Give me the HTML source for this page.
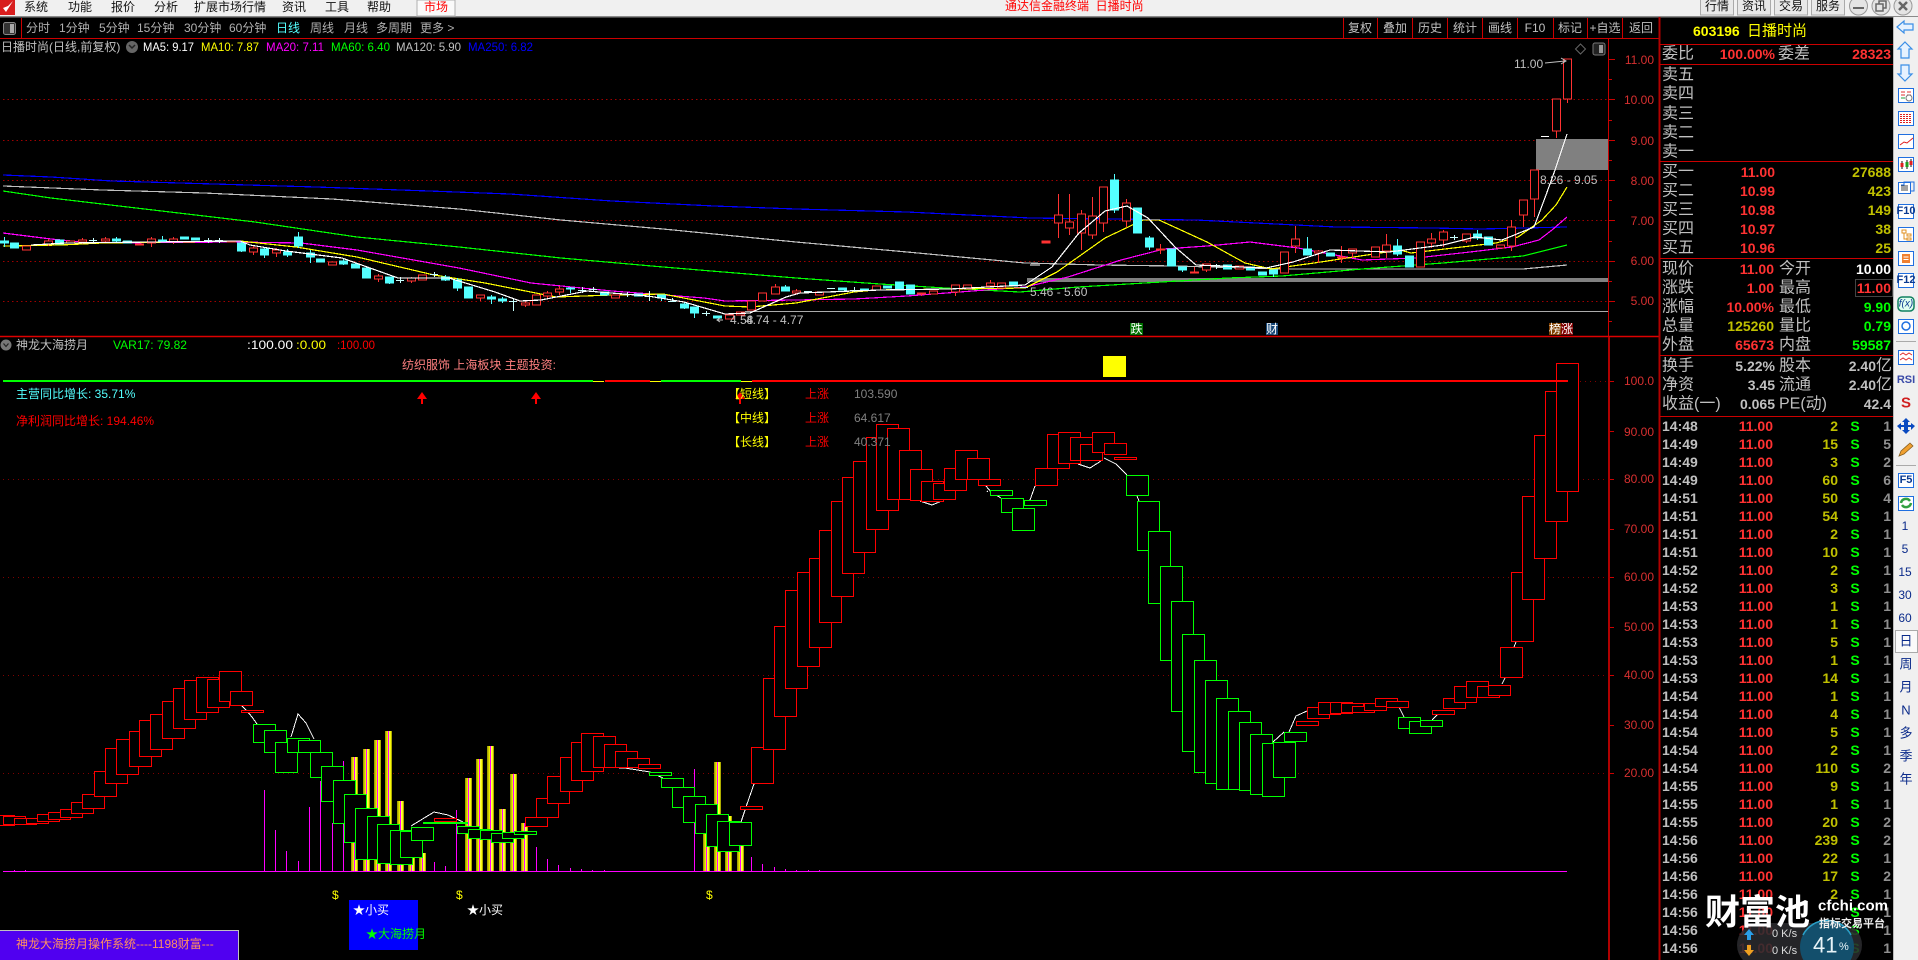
<!DOCTYPE html>
<html><head><meta charset="utf-8"><style>
html,body{margin:0;padding:0;background:#000;overflow:hidden}
svg{display:block}
text{font-family:"Liberation Sans","WenQuanYi Zen Hei","Noto Sans CJK SC",sans-serif;font-size:12px;dominant-baseline:central;white-space:pre}
.b text,text.b{font-weight:bold;font-size:14px}
.l text,text.l{font-size:16px;fill:#c0c0c0}
.e text{text-anchor:end}
.m text,text.m{text-anchor:middle}
.ma{fill:none;stroke-width:1.2;shape-rendering:crispEdges}
</style></head><body>
<svg xmlns="http://www.w3.org/2000/svg" width="1918" height="960" viewBox="0 0 1918 960">
<rect width="1918" height="960" fill="#000"/>
<!-- menu bar -->
<rect width="1918" height="16" fill="#f0f0f0"/><rect y="16" width="1918" height="1.5" fill="#8a8a8a"/>
<rect x="417" y="0" width="38" height="16" fill="#fafafa" stroke="#b0b0b0"/>
<rect width="15" height="15" fill="#d81e1e"/><path d="M3 8l3 4 7-11-5 5z" fill="#fff"/>
<g fill="#111">
<text x="24" y="7">系统</text><text x="68" y="7">功能</text><text x="111" y="7">报价</text><text x="154" y="7">分析</text><text x="194" y="7">扩展市场行情</text><text x="282" y="7">资讯</text><text x="325" y="7">工具</text><text x="367" y="7">帮助</text></g>
<text x="424" y="7" fill="#f00">市场</text>
<text x="1005" y="6" fill="#f00">通达信金融终端  日播时尚</text>
<g fill="#e8e8e8" stroke="#aaa"><rect x="1700.5" y="-2" width="33" height="17"/><rect x="1737.5" y="-2" width="33" height="17"/><rect x="1774.5" y="-2" width="33" height="17"/><rect x="1811.5" y="-2" width="33" height="17"/></g>
<g fill="#111"><text x="1705" y="6">行情</text><text x="1742" y="6">资讯</text><text x="1779" y="6">交易</text><text x="1816" y="6">服务</text></g>
<g fill="#e4e4e4" stroke="#999"><circle cx="1858.5" cy="6" r="9"/><circle cx="1881" cy="6" r="9"/><circle cx="1903" cy="6" r="9"/></g>
<path d="M1853 8h11" stroke="#666" stroke-width="2"/><path d="M1876 4h7v7h-7zM1879 4v-3h7v7h-3" fill="none" stroke="#666" stroke-width="1.5"/><path d="M1899 2l8 8M1907 2l-8 8" stroke="#666" stroke-width="2.5"/>
<!-- toolbar -->
<rect x="3.5" y="22.5" width="12" height="12" rx="2" fill="#333" stroke="#888"/><rect x="10" y="24" width="4" height="9" fill="#aaa"/>
<path d="M21.5 18V38" stroke="#c00"/>
<g fill="#b0b0b0"><text x="26" y="28">分时</text><text x="59" y="28">1分钟</text><text x="99" y="28">5分钟</text><text x="137" y="28">15分钟</text><text x="184" y="28">30分钟</text><text x="229" y="28">60分钟</text><text x="310" y="28">周线</text><text x="344" y="28">月线</text><text x="376" y="28">多周期</text><text x="420" y="28">更多 &gt;</text></g>
<text x="276" y="28" fill="#54ffff">日线</text>
<path d="M0 38.5H1659" stroke="#c00"/>
<path d="M1343.5 18V38M1377.5 18V38M1412.5 18V38M1447.5 18V38M1482.5 18V38M1517.5 18V38M1553.5 18V38M1587.5 18V38M1622.5 18V38" stroke="#c00"/>
<g class="m" fill="#c0c0c0"><text x="1360" y="28">复权</text><text x="1395" y="28">叠加</text><text x="1430" y="28">历史</text><text x="1465" y="28">统计</text><text x="1500" y="28">画线</text><text x="1535" y="28">F10</text><text x="1570" y="28">标记</text><text x="1605" y="28">+自选</text><text x="1641" y="28">返回</text></g>
<!-- title -->
<text x="1" y="47" fill="#c0c0c0">日播时尚(日线,前复权)</text>
<circle cx="132" cy="47" r="6" fill="#666"/><path d="M129 45l3 3 3-3" fill="none" stroke="#222" stroke-width="1.5"/>
<text x="143" y="47" fill="#fff" textLength="51" lengthAdjust="spacingAndGlyphs">MA5: 9.17</text><text x="201" y="47" fill="#ff0" textLength="58" lengthAdjust="spacingAndGlyphs">MA10: 7.87</text><text x="266" y="47" fill="#f0f" textLength="58" lengthAdjust="spacingAndGlyphs">MA20: 7.11</text><text x="331" y="47" fill="#0f0" textLength="59" lengthAdjust="spacingAndGlyphs">MA60: 6.40</text><text x="396" y="47" fill="#c0c0c0" textLength="65" lengthAdjust="spacingAndGlyphs">MA120: 5.90</text><text x="468" y="47" fill="#00f" textLength="65" lengthAdjust="spacingAndGlyphs">MA250: 6.82</text>
<!-- top chart grid -->
<path d="M3 99.5H1608M3 140.5H1608M3 180.5H1608M3 220.5H1608M3 261.5H1608M3 301.5H1608" stroke="#a00000" stroke-dasharray="1.5 3" fill="none"/>
<path d="M1608.5 39V336" stroke="#c00"/>
<path d="M1609 59.5h6M1609 79.5h3M1609 99.5h6M1609 120.5h3M1609 140.5h6M1609 160.5h3M1609 180.5h6M1609 200.5h3M1609 220.5h6M1609 241.5h3M1609 261.5h6M1609 281.5h3M1609 301.5h6M1609 321.5h3" stroke="#c00" fill="none"/>
<g class="e" fill="#d83030"><text x="1654" y="60">11.00</text><text x="1654" y="100">10.00</text><text x="1654" y="141">9.00</text><text x="1654" y="181">8.00</text><text x="1654" y="221">7.00</text><text x="1654" y="261">6.00</text><text x="1654" y="301">5.00</text></g>
<!-- zones -->
<rect x="1536" y="139" width="72" height="31" fill="#808080"/>
<rect x="1027" y="278" width="581" height="4" fill="#808080"/>
<path d="M745 311.5H1608" stroke="#aaa"/>
<!-- MAs -->
<polyline class="ma" stroke="#00f" points="3,175 51,177 112,181 214,184 316,187 429,191 510,194 612,201 714,206 796,209 907,212 1030,218 1196,220 1336,227 1432,228 1480,229 1567,227"/>
<polyline class="ma" stroke="#c0c0c0" points="3,186 102,190 204,193 332,199 459,209 561,220 663,229 796,242 907,252 1025,263 1100,265 1175,266 1282,269 1523,269 1567,265"/>
<polyline class="ma" stroke="#0f0" points="3,191 51,198 153,210 255,222 357,237 459,247 561,258 663,267 796,278 880,284 961,289 1020,292 1078,287 1228,278 1282,276 1362,269 1443,263 1523,256 1567,245"/>
<polyline class="ma" stroke="#f0f" points="3,233 51,239 92,243 235,242 301,243 357,250 459,268 531,283 612,291 704,298 725,301 796,300 854,299 907,296 1025,287 1068,277 1121,260 1164,249 1207,246 1250,242 1298,248 1362,260 1416,258 1470,252 1512,247 1539,240 1552,230 1567,217"/>
<polyline class="ma" stroke="#ff0" points="3,246 61,245 102,243 240,241 296,247 357,257 434,275 485,283 556,297 612,295 663,294 725,306 750,307 796,303 854,292 875,290 1025,288 1057,272 1105,238 1143,220 1159,220 1207,242 1245,263 1271,269 1314,263 1400,250 1411,253 1496,243 1518,237 1542,220 1556,205 1567,187"/>
<!-- candles red -->
<g stroke="#ff3232" fill="none" shape-rendering="crispEdges">
<path d="M48.500 239V246M82.500 238V244M105.500 237V243M151.500 237V247M173.500 237V244M253.500 245V255M276.500 248V257M378.500 274V282M411.500 277V283M480.500 295V301M525.500 301V307M547.500 291V298M559.500 286V295M775.500 284V294M796.500 289V293M921.500 293V296M955.500 285V296M990.500 280V286M1058.500 194V238M1069.500 194V235M1081.500 210V250M1092.500 197V239M1103.500 187V232M1126.500 199V227M1160.500 244V254M1194.500 267V273M1206.500 264V272M1295.500 226V253M1318.500 250V263M1341.500 246V263M1352.500 249V258M1386.500 234V258M1431.500 233V248M1443.500 230V247M1466.500 234V243M1511.500 220V251M1523.500 200V227M1534.500 170V217M1556.500 99V138M1567.500 59V103"/>
<path fill="#000" d="M22.500 246h8v4h-8zM44.500 241h8v3h-8zM66.500 241h8v2h-8zM78.500 240h8v2h-8zM101.500 239h8v2h-8zM135.500 244h8v1h-8zM147.500 239h8v4h-8zM169.500 239h8v3h-8zM227.500 241h8v1h-8zM249.500 248h8v4h-8zM272.500 250h8v3h-8zM328.500 262h8v3h-8zM374.500 276h8v3h-8zM407.500 278h8v3h-8zM418.500 275h8v5h-8zM476.500 295h8v3h-8zM521.500 303h8v2h-8zM532.500 295h8v10h-8zM543.500 293h8v3h-8zM555.500 289h8v3h-8zM611.500 295h8v3h-8zM725.500 315h8v4h-8zM736.500 312h8v3h-8zM747.500 301h8v9h-8zM758.500 293h8v8h-8zM771.500 287h8v7h-8zM792.500 291h8v2h-8zM815.500 292h8v3h-8zM872.500 286h8v4h-8zM917.500 293h8v1h-8zM929.500 291h8v3h-8zM951.500 285h8v7h-8zM963.500 285h8v4h-8zM986.500 283h8v3h-8zM997.500 283h8v5h-8zM1054.500 215h8v8h-8zM1065.500 222h8v6h-8zM1077.500 214h8v19h-8zM1088.500 216h8v19h-8zM1099.500 187h8v36h-8zM1122.500 203h8v18h-8zM1156.500 249h8v1h-8zM1190.500 272h8v1h-8zM1202.500 264h8v6h-8zM1235.500 266h8v3h-8zM1280.500 252h8v21h-8zM1291.500 239h8v7h-8zM1314.500 251h8v2h-8zM1337.500 257h8v1h-8zM1348.500 249h8v4h-8zM1371.500 247h8v10h-8zM1382.500 245h8v6h-8zM1416.500 242h8v25h-8zM1427.500 239h8v4h-8zM1439.500 232h8v8h-8zM1462.500 234h8v7h-8zM1496.500 245h8v3h-8zM1507.500 227h8v19h-8zM1519.500 200h8v15h-8zM1530.500 170h8v29h-8zM1552.500 99h8v32h-8zM1563.500 59h8v40h-8z"/>
<rect x="1042" y="241" width="8" height="2" fill="#ff3232"/>
</g>
<!-- candles cyan -->
<g stroke="#54ffff" fill="#54ffff" shape-rendering="crispEdges">
<path d="M4.500 237V247M116.500 237V243M162.500 236V242M241.500 241V252M264.500 247V258M287.500 249V257M298.500 232V248M310.500 250V263M343.500 259V265M389.500 277V284M445.500 275V281M457.500 278V291M491.500 295V304M502.500 297V303M570.500 287V293M661.500 295V301M684.500 302V309M694.500 307V318M785.500 285V291M1114.500 174V213M1149.500 236V250M1182.500 267V272M1273.500 270V277M1307.500 237V255M1397.500 239V256M1477.500 230V240"/>
<path d="M.5 241h8v2h-8zM10.500 243h8v5h-8zM55.500 240h8v4h-8zM112.500 239h8v2h-8zM123.500 241h8v2h-8zM158.500 240h8v1h-8zM180.500 237h8v2h-8zM191.500 238h8v2h-8zM237.500 243h8v8h-8zM260.500 249h8v6h-8zM283.500 252h8v3h-8zM294.500 237h8v9h-8zM306.500 253h8v4h-8zM316.500 259h8v3h-8zM339.500 261h8v3h-8zM351.500 264h8v4h-8zM362.500 268h8v10h-8zM385.500 277h8v6h-8zM441.500 277h8v3h-8zM453.500 280h8v8h-8zM464.500 287h8v11h-8zM487.500 297h8v2h-8zM498.500 299h8v2h-8zM566.500 288h8v1h-8zM600.500 292h8v3h-8zM634.500 294h8v2h-8zM657.500 295h8v3h-8zM680.500 304h8v4h-8zM690.500 307h8v6h-8zM713.500 316h8v2h-8zM781.500 287h8v4h-8zM838.500 288h8v2h-8zM860.500 289h8v1h-8zM883.500 286h8v2h-8zM895.500 282h8v7h-8zM906.500 285h8v9h-8zM1009.500 282h8v4h-8zM1110.500 180h8v30h-8zM1133.500 208h8v25h-8zM1145.500 238h8v9h-8zM1167.500 249h8v17h-8zM1178.500 267h8v3h-8zM1223.500 265h8v4h-8zM1246.500 267h8v3h-8zM1258.500 272h8v3h-8zM1269.500 270h8v4h-8zM1303.500 249h8v6h-8zM1326.500 253h8v3h-8zM1393.500 246h8v8h-8zM1405.500 256h8v11h-8zM1473.500 234h8v4h-8zM1484.500 237h8v8h-8z"/>
</g>
<path d="M89 240.500h8M93.500 238V242M204 240.500h8M208.500 238V243M215 240.500h8M219.500 238V243M396 280.500h8M400.500 277V283M430 274.500h8M434.500 272V277M509 301.500h8M513.500 298V311M578 290.500h8M582.500 287V293M589 289.500h8M593.500 287V292M623 294.500h8M627.500 292V297M645 296.500h8M649.500 291V301M668 301.500h8M672.500 298V302M702 313.500h8M706.500 311V316M804 291.500h8M827 288.500h8M850 290.500h8M854.500 287V292M1020 287.500h8M1212 265.500h8M1216.500 264V269M1450 237.500h8M1454.500 235V240" stroke="#c8ffff" fill="none" shape-rendering="crispEdges"/>
<polyline class="ma" stroke="#fff" points="31,245 66,243 240,241 250,245 286,251 342,258 398,278 449,278 495,292 520,301 541,300 587,291 648,296 684,302 725,314 750,313 786,297 800,293 880,290 950,289 1025,285 1052,267 1079,233 1105,211 1127,206 1148,218 1175,247 1196,265 1266,268 1293,262 1330,250 1389,252 1443,245 1475,237 1502,240 1534,227 1546,195 1555,170 1567,134"/>
<path d="M1030 265h10M1541 136.500h8" stroke="#fff" shape-rendering="crispEdges"/>
<!-- top chart labels -->
<g fill="#c0c0c0"><text x="1514" y="64">11.00</text><text x="1540" y="180">8.26 - 9.05</text><text x="1030" y="292">5.46 - 5.60</text><text x="730" y="320">4.58</text><text x="746" y="320">4.74 - 4.77</text></g>
<path d="M1545 63l20-2M1561 58l5 3-5 3" stroke="#c0c0c0" fill="none"/>
<path d="M720 318l-3 2 3 2M717 320h6" stroke="#c0c0c0" fill="none"/>
<path d="M1580.500 44l5 5-5 5-5-5z" fill="none" stroke="#666"/>
<rect x="1593" y="43" width="12" height="12" rx="2" fill="#222" stroke="#777"/><rect x="1599" y="45" width="4" height="8" fill="#999"/>
<rect x="1130" y="323" width="13" height="12" fill="#007000"/><text x="1136.500" y="329" class="m" fill="#fff">跌</text>
<rect x="1266" y="323" width="12" height="12" fill="#184878"/><text x="1272" y="329" class="m" fill="#fff">财</text>
<rect x="1549" y="323" width="12" height="12" fill="#804000"/><rect x="1561" y="323" width="12" height="12" fill="#800000"/><text x="1555" y="329" class="m" fill="#fff">榜</text><text x="1567" y="329" class="m" fill="#fff">涨</text>
<path d="M0 336.500H1659" stroke="#d00" stroke-width="1.5"/>
<!-- lower header -->
<circle cx="6" cy="345" r="5.500" fill="#777"/><path d="M3.500 343.500l2.500 3 2.500-3" fill="none" stroke="#222" stroke-width="1.200"/>
<text x="16" y="345" fill="#c0c0c0">神龙大海捞月</text><text x="113" y="345" fill="#0f0" textLength="74" lengthAdjust="spacingAndGlyphs">VAR17: 79.82</text>
<text x="247" y="345" fill="#fff" textLength="46" lengthAdjust="spacingAndGlyphs">:100.00</text><text x="296" y="345" fill="#ff0" textLength="30" lengthAdjust="spacingAndGlyphs">:0.00</text><text x="337" y="345" fill="#f00" textLength="38" lengthAdjust="spacingAndGlyphs">:100.00</text>
<text x="402" y="365" fill="#ff8080">纺织服饰 上海板块 主题投资:</text>
<text x="16" y="394" fill="#54ffff">主营同比增长: 35.71%</text><text x="16" y="421" fill="#f00">净利润同比增长: 194.46%</text>
<!-- lower grid -->
<path d="M3 479.500H1608M3 577.500H1608M3 675.500H1608M3 773.500H1608M1570 381.500H1608" stroke="#800000" stroke-dasharray="1 4" fill="none"/>
<path d="M1609 337V960" stroke="#b00000" stroke-width="2"/>
<path d="M1610 381.500h4M1610 431.500h4M1610 479.500h4M1610 529.500h4M1610 577.500h4M1610 627.500h4M1610 675.500h4M1610 725.500h4M1610 773.500h4" stroke="#c00"/>
<g class="e" fill="#d83030"><text x="1654" y="381">100.0</text><text x="1654" y="432">90.00</text><text x="1654" y="479">80.00</text><text x="1654" y="529">70.00</text><text x="1654" y="577">60.00</text><text x="1654" y="627">50.00</text><text x="1654" y="675">40.00</text><text x="1654" y="725">30.00</text><text x="1654" y="773">20.00</text></g>
<!-- yellow bars -->
<defs><linearGradient id="yb"><stop offset="0" stop-color="#909000"/><stop offset=".25" stop-color="#d0d000"/><stop offset=".42" stop-color="#ffff00"/><stop offset=".45" stop-color="#f0f"/><stop offset=".57" stop-color="#f0f"/><stop offset=".6" stop-color="#ffff60"/><stop offset=".8" stop-color="#ffff00"/><stop offset="1" stop-color="#808000"/></linearGradient></defs>
<g fill="url(#yb)">
<rect x="351" y="757" width="7" height="114"/><rect x="363" y="749" width="7" height="122"/><rect x="374" y="740" width="7" height="131"/><rect x="385" y="731" width="7" height="140"/><rect x="397" y="801" width="7" height="70"/><rect x="408" y="857" width="7" height="14"/><rect x="419" y="853" width="7" height="18"/><rect x="465" y="778" width="7" height="93"/><rect x="476" y="759" width="7" height="112"/><rect x="487" y="746" width="7" height="125"/><rect x="499" y="809" width="7" height="62"/><rect x="510" y="774" width="7" height="97"/><rect x="521" y="823" width="7" height="48"/><rect x="703" y="815" width="7" height="56"/><rect x="714" y="762" width="7" height="109"/><rect x="725" y="816" width="7" height="55"/><rect x="737" y="845" width="7" height="26"/>
</g>
<path d="M3 871.500H1567M264.500 790V871M275.500 830V871M286.500 851V871M298.500 861V871M309.500 807V871M320.500 781V871M332.500 823V871M343.500 761V871M434.500 862V871M445.500 866V871M456.500 810V871M536.500 847V871M547.500 859V871M558.500 865V871M570.500 868V871M581.500 869V871M592.500 870V871M14.500 870V871M25.500 870V871M604.500 870V871M694.500 769V871M751.500 857V871M762.500 864V871M774.500 867V871M785.500 869V871M796.500 870V871M808.500 870V871M819.500 870V871" stroke="#f0f" fill="none" shape-rendering="crispEdges"/>
<!-- white connectors -->
<path d="M241 705l6 6 5 6 5 7M291 737l7-23 8 9 8 16M411 826l23-14 14 3 15 7M600 767l25 1 25 4 13 6M741 822l6-18 7-20M920 501l12 4 12-5M986 486l5 6 10 6M1030 500l5-14M1078 464l12 4 11-7M1104 458l12 6 11 11M1137 496l2 5M1289 732l7-16 11-5M1399 707l5 10M1432 720l5-5M1502 684l3-6M1514 647l2-5M1273 742l11-10M988 492l-1-1" stroke="#fff" fill="none" shape-rendering="crispEdges"/>
<!-- lower boxes -->
<g shape-rendering="crispEdges" transform="translate(.5 .5)" fill="#000" stroke="#f00">
<path d="M-8 815h22v10h-22z"/><path d="M3 816h22v8h-22z"/><path d="M14 818h22v6h-22z"/><path d="M26 818h22v5h-22z"/><path d="M37 814h22v7h-22z"/><path d="M48 812h22v7h-22z"/><path d="M60 809h22v8h-22z"/><path d="M71 802h22v11h-22z"/><path d="M82 794h22v14h-22z"/><path d="M94 771h22v25h-22z"/><path d="M105 748h22v35h-22z"/><path d="M116 739h22v35h-22z"/><path d="M129 731h22v35h-22z"/><path d="M139 720h22v36h-22z"/><path d="M150 714h22v35h-22z"/><path d="M162 701h22v37h-22z"/><path d="M173 688h22v40h-22z"/><path d="M184 680h22v39h-22z"/><path d="M196 677h22v35h-22z"/><path d="M207 679h22v28h-22z"/><path d="M219 671h22v30h-22z"/><path d="M230 691h22v14h-22z"/><path d="M241 710h22v2h-22z"/>
<g stroke="#0f0"><path d="M253 724h22v18h-22z"/><path d="M264 730h22v22h-22z"/><path d="M275 742h22v30h-22z"/><path d="M287 738h22v14h-22z"/><path d="M298 740h22v12h-22z"/><path d="M310 752h22v25h-22z"/><path d="M321 766h22v35h-22z"/><path d="M333 780h22v43h-22z"/><path d="M344 794h22v48h-22z"/><path d="M355 808h22v51h-22z"/><path d="M367 816h22v43h-22z"/><path d="M377 824h22v39h-22z"/><path d="M390 830h22v34h-22z"/><path d="M400 831h22v26h-22z"/><path d="M411 827h22v13h-22z"/><path d="M423 822h22v1h-22z"/></g>
<path d="M434 818h22v3h-22z"/>
<g stroke="#0f0"><path d="M445 822h22v1h-22z"/><path d="M457 826h22v7h-22z"/><path d="M468 829h22v9h-22z"/><path d="M480 830h22v9h-22z"/><path d="M491 833h22v9h-22z"/><path d="M502 832h22v6h-22z"/><path d="M514 831h22v3h-22z"/></g>
<path d="M525 817h22v9h-22z"/><path d="M536 798h22v19h-22z"/><path d="M547 776h22v27h-22z"/><path d="M560 757h22v34h-22z"/><path d="M571 742h22v38h-22z"/><path d="M581 733h22v38h-22z"/><path d="M593 736h22v31h-22z"/><path d="M604 744h22v23h-22z"/><path d="M615 751h22v16h-22z"/><path d="M627 758h22v9h-22z"/><path d="M638 764h22v4h-22z"/>
<g stroke="#0f0"><path d="M649 772h22v3h-22z"/><path d="M661 778h22v9h-22z"/><path d="M672 787h22v20h-22z"/><path d="M683 796h22v26h-22z"/><path d="M695 804h22v29h-22z"/><path d="M706 814h22v32h-22z"/><path d="M717 821h22v30h-22z"/><path d="M729 822h22v23h-22z"/></g>
<path d="M740 806h22v3h-22z"/><path d="M751 747h22v36h-22z"/><path d="M763 678h22v71h-22z"/><path d="M774 626h22v90h-22z"/><path d="M785 590h22v98h-22z"/><path d="M797 572h22v94h-22z"/><path d="M809 558h22v89h-22z"/><path d="M819 530h22v92h-22z"/><path d="M831 501h22v95h-22z"/><path d="M842 477h22v96h-22z"/><path d="M853 461h22v91h-22z"/><path d="M866 437h22v92h-22z"/><path d="M876 424h22v86h-22z"/><path d="M887 428h22v71h-22z"/><path d="M899 450h22v49h-22z"/><path d="M910 469h22v31h-22z"/><path d="M921 481h22v20h-22z"/><path d="M933 483h22v16h-22z"/><path d="M944 468h22v22h-22z"/><path d="M955 450h22v29h-22z"/><path d="M967 458h22v21h-22z"/><path d="M978 479h22v6h-22z"/>
<g stroke="#0f0"><path d="M990 490h22v5h-22z"/><path d="M1001 498h22v14h-22z"/><path d="M1012 508h22v22h-22z"/><path d="M1024 500h22v5h-22z"/></g>
<path d="M1035 468h22v17h-22z"/><path d="M1047 434h22v34h-22z"/><path d="M1058 432h22v31h-22z"/><path d="M1070 437h22v23h-22z"/><path d="M1080 444h22v16h-22z"/><path d="M1092 432h22v20h-22z"/><path d="M1104 443h22v11h-22z"/><path d="M1114 457h22v2h-22z"/>
<g stroke="#0f0"><path d="M1126 475h22v20h-22z"/><path d="M1137 501h22v49h-22z"/><path d="M1148 531h22v72h-22z"/><path d="M1160 566h22v94h-22z"/><path d="M1171 601h22v110h-22z"/><path d="M1182 634h22v117h-22z"/><path d="M1194 660h22v112h-22z"/><path d="M1205 680h22v103h-22z"/><path d="M1216 698h22v91h-22z"/><path d="M1228 711h22v78h-22z"/><path d="M1239 722h22v68h-22z"/><path d="M1250 734h22v60h-22z"/><path d="M1262 743h22v53h-22z"/><path d="M1273 742h22v35h-22z"/><path d="M1284 732h22v9h-22z"/></g>
<path d="M1296 721h22v4h-22z"/><path d="M1307 707h22v11h-22z"/><path d="M1318 702h22v12h-22z"/><path d="M1330 702h22v11h-22z"/><path d="M1341 703h22v9h-22z"/><path d="M1352 706h22v6h-22z"/><path d="M1364 703h22v7h-22z"/><path d="M1375 698h22v8h-22z"/><path d="M1386 701h22v6h-22z"/>
<g stroke="#0f0"><path d="M1398 717h22v11h-22z"/><path d="M1409 721h22v12h-22z"/><path d="M1420 720h22v6h-22z"/></g>
<path d="M1432 710h22v4h-22z"/><path d="M1443 698h22v10h-22z"/><path d="M1454 686h22v16h-22z"/><path d="M1466 681h22v16h-22z"/><path d="M1477 686h22v11h-22z"/><path d="M1488 685h22v10h-22z"/><path d="M1500 647h22v30h-22z"/><path d="M1511 572h22v69h-22z"/><path d="M1522 496h22v103h-22z"/><path d="M1534 435h22v123h-22z"/><path d="M1545 391h22v130h-22z"/><path d="M1556 363h22v128h-22z"/>
</g>
<!-- signal line -->
<g shape-rendering="crispEdges"><rect x="3" y="380" width="590" height="2" fill="#0f0"/><rect x="593" y="381" width="11" height="1" fill="#ff0"/><rect x="605" y="380" width="45" height="2" fill="#f00"/><rect x="650" y="381" width="11" height="1" fill="#ff0"/><rect x="661" y="380" width="80" height="2" fill="#0f0"/><rect x="741" y="381" width="11" height="1" fill="#ff0"/><rect x="752" y="380" width="816" height="2" fill="#f00"/></g>
<path d="M422 392l-5 7h4v5h2v-5h4zM536 392l-5 7h4v5h2v-5h4zM740 392l-5 7h4v5h2v-5h4z" fill="#f00"/>
<rect x="1103" y="356" width="23" height="21" fill="#ff0"/>
<g fill="#ff0"><text x="728" y="394">【短线】</text><text x="728" y="418">【中线】</text><text x="728" y="442">【长线】</text></g>
<g fill="#f00"><text x="805" y="394">上涨</text><text x="805" y="418">上涨</text><text x="805" y="442">上涨</text></g>
<g fill="#808080"><text x="854" y="394">103.590</text><text x="854" y="418">64.617</text><text x="854" y="442">40.371</text></g>
<!-- bottom marks -->
<g fill="#ff0"><text x="332" y="895">$</text><text x="456" y="895">$</text><text x="706" y="895">$</text></g>
<rect x="349" y="900" width="69" height="50" fill="#00f"/>
<text x="353" y="910" fill="#fff">★小买</text><text x="366" y="934" fill="#0f0">★大海捞月</text><text x="467" y="910" fill="#fff">★小买</text>
<rect x="0" y="930" width="239" height="30" fill="#5000f0"/><path d="M0 930.500H238.500V960" fill="none" stroke="#c0c0c0"/>
<text x="16" y="944" fill="#ff9060">神龙大海捞月操作系统----1198财富---</text>
<!-- right panel -->
<path d="M1659.500 17V960" stroke="#b00000" stroke-width="2"/>
<path d="M1660 44.500H1893M1660 64.500H1893M1660 161.500H1893M1660 258.500H1893M1660 355.500H1893M1660 416.500H1893" stroke="#c00"/>
<text x="1693" y="31" class="b" fill="#ff0">603196</text><text x="1747" y="31" fill="#ff0" style="font-size:15px">日播时尚</text>
<g class="l"><text x="1662" y="54">委比</text><text x="1778" y="54">委差</text><text x="1662" y="75">卖五</text><text x="1662" y="94">卖四</text><text x="1662" y="114">卖三</text><text x="1662" y="133">卖二</text><text x="1662" y="152">卖一</text><text x="1662" y="172">买一</text><text x="1662" y="191">买二</text><text x="1662" y="210">买三</text><text x="1662" y="229">买四</text><text x="1662" y="248">买五</text><text x="1662" y="269">现价</text><text x="1662" y="288">涨跌</text><text x="1662" y="307">涨幅</text><text x="1662" y="326">总量</text><text x="1662" y="345">外盘</text><text x="1779" y="269">今开</text><text x="1779" y="288">最高</text><text x="1779" y="307">最低</text><text x="1779" y="326">量比</text><text x="1779" y="345">内盘</text><text x="1662" y="366">换手</text><text x="1662" y="385">净资</text><text x="1662" y="404">收益(一)</text><text x="1779" y="366">股本</text><text x="1779" y="385">流通</text><text x="1779" y="404">PE(动)</text></g>
<rect x="1855.500" y="279.500" width="37" height="17" fill="none" stroke="#444"/>
<g class="b e" fill="#ff3232"><text x="1775" y="54">100.00%</text><text x="1891" y="54">28323</text><text x="1775" y="172">11.00</text><text x="1775" y="191">10.99</text><text x="1775" y="210">10.98</text><text x="1775" y="229">10.97</text><text x="1775" y="248">10.96</text><text x="1774" y="269">11.00</text><text x="1774" y="288">1.00</text><text x="1774" y="307">10.00%</text><text x="1774" y="345">65673</text><text x="1891" y="288">11.00</text></g>
<g class="b e" fill="#c0c000"><text x="1891" y="172">27688</text><text x="1891" y="191">423</text><text x="1891" y="210">149</text><text x="1891" y="229">38</text><text x="1891" y="248">25</text><text x="1774" y="326">125260</text></g>
<g class="b e" fill="#0f0"><text x="1891" y="307">9.90</text><text x="1891" y="326">0.79</text><text x="1891" y="345">59587</text></g>
<text x="1891" y="269" class="b" text-anchor="end" fill="#fff" style="text-anchor:end">10.00</text>
<g class="b e" fill="#c0c0c0"><text x="1775" y="366">5.22%</text><text x="1775" y="385">3.45</text><text x="1775" y="404">0.065</text><text x="1876" y="366">2.40</text><text x="1876" y="385">2.40</text><text x="1891" y="404">42.4</text></g>
<text x="1876" y="366" class="l">亿</text><text x="1876" y="385" class="l">亿</text>
<!-- ticks -->
<g class="b" fill="#c0c0c0"><text x="1662" y="426">14:48</text><text x="1662" y="444">14:49</text><text x="1662" y="462">14:49</text><text x="1662" y="480">14:49</text><text x="1662" y="498">14:51</text><text x="1662" y="516">14:51</text><text x="1662" y="534">14:51</text><text x="1662" y="552">14:51</text><text x="1662" y="570">14:52</text><text x="1662" y="588">14:52</text><text x="1662" y="606">14:53</text><text x="1662" y="624">14:53</text><text x="1662" y="642">14:53</text><text x="1662" y="660">14:53</text><text x="1662" y="678">14:53</text><text x="1662" y="696">14:54</text><text x="1662" y="714">14:54</text><text x="1662" y="732">14:54</text><text x="1662" y="750">14:54</text><text x="1662" y="768">14:54</text><text x="1662" y="786">14:55</text><text x="1662" y="804">14:55</text><text x="1662" y="822">14:55</text><text x="1662" y="840">14:56</text><text x="1662" y="858">14:56</text><text x="1662" y="876">14:56</text><text x="1662" y="894">14:56</text><text x="1662" y="912">14:56</text><text x="1662" y="930">14:56</text><text x="1662" y="948">14:56</text></g>
<g class="b e" fill="#ff3232"><text x="1773" y="426">11.00</text><text x="1773" y="444">11.00</text><text x="1773" y="462">11.00</text><text x="1773" y="480">11.00</text><text x="1773" y="498">11.00</text><text x="1773" y="516">11.00</text><text x="1773" y="534">11.00</text><text x="1773" y="552">11.00</text><text x="1773" y="570">11.00</text><text x="1773" y="588">11.00</text><text x="1773" y="606">11.00</text><text x="1773" y="624">11.00</text><text x="1773" y="642">11.00</text><text x="1773" y="660">11.00</text><text x="1773" y="678">11.00</text><text x="1773" y="696">11.00</text><text x="1773" y="714">11.00</text><text x="1773" y="732">11.00</text><text x="1773" y="750">11.00</text><text x="1773" y="768">11.00</text><text x="1773" y="786">11.00</text><text x="1773" y="804">11.00</text><text x="1773" y="822">11.00</text><text x="1773" y="840">11.00</text><text x="1773" y="858">11.00</text><text x="1773" y="876">11.00</text><text x="1773" y="894">11.00</text><text x="1773" y="912">11.00</text><text x="1773" y="930">11.00</text><text x="1773" y="948">11.00</text></g>
<g class="b e" fill="#c0c000"><text x="1838" y="426">2</text><text x="1838" y="444">15</text><text x="1838" y="462">3</text><text x="1838" y="480">60</text><text x="1838" y="498">50</text><text x="1838" y="516">54</text><text x="1838" y="534">2</text><text x="1838" y="552">10</text><text x="1838" y="570">2</text><text x="1838" y="588">3</text><text x="1838" y="606">1</text><text x="1838" y="624">1</text><text x="1838" y="642">5</text><text x="1838" y="660">1</text><text x="1838" y="678">14</text><text x="1838" y="696">1</text><text x="1838" y="714">4</text><text x="1838" y="732">5</text><text x="1838" y="750">2</text><text x="1838" y="768">110</text><text x="1838" y="786">9</text><text x="1838" y="804">1</text><text x="1838" y="822">20</text><text x="1838" y="840">239</text><text x="1838" y="858">22</text><text x="1838" y="876">17</text><text x="1838" y="894">2</text></g>
<g class="b m" fill="#0f0"><text x="1855" y="426">S</text><text x="1855" y="444">S</text><text x="1855" y="462">S</text><text x="1855" y="480">S</text><text x="1855" y="498">S</text><text x="1855" y="516">S</text><text x="1855" y="534">S</text><text x="1855" y="552">S</text><text x="1855" y="570">S</text><text x="1855" y="588">S</text><text x="1855" y="606">S</text><text x="1855" y="624">S</text><text x="1855" y="642">S</text><text x="1855" y="660">S</text><text x="1855" y="678">S</text><text x="1855" y="696">S</text><text x="1855" y="714">S</text><text x="1855" y="732">S</text><text x="1855" y="750">S</text><text x="1855" y="768">S</text><text x="1855" y="786">S</text><text x="1855" y="804">S</text><text x="1855" y="822">S</text><text x="1855" y="840">S</text><text x="1855" y="858">S</text><text x="1855" y="876">S</text><text x="1855" y="894">S</text><text x="1855" y="912">S</text><text x="1855" y="930">S</text><text x="1855" y="948">S</text></g>
<g class="b e" fill="#909090"><text x="1891" y="426">1</text><text x="1891" y="444">5</text><text x="1891" y="462">2</text><text x="1891" y="480">6</text><text x="1891" y="498">4</text><text x="1891" y="516">1</text><text x="1891" y="534">1</text><text x="1891" y="552">1</text><text x="1891" y="570">1</text><text x="1891" y="588">1</text><text x="1891" y="606">1</text><text x="1891" y="624">1</text><text x="1891" y="642">1</text><text x="1891" y="660">1</text><text x="1891" y="678">1</text><text x="1891" y="696">1</text><text x="1891" y="714">1</text><text x="1891" y="732">1</text><text x="1891" y="750">1</text><text x="1891" y="768">2</text><text x="1891" y="786">1</text><text x="1891" y="804">1</text><text x="1891" y="822">2</text><text x="1891" y="840">2</text><text x="1891" y="858">1</text><text x="1891" y="876">2</text><text x="1891" y="894">1</text><text x="1891" y="912">1</text><text x="1891" y="930">1</text><text x="1891" y="948">1</text></g>
<!-- watermark -->
<rect x="1737" y="923" width="125" height="44" rx="22" fill="#2a2a2e" opacity=".88"/>
<circle cx="1827" cy="947" r="27" fill="#134f6c"/><path d="M1803 935a27 27 0 0 1 48 0" fill="none" stroke="#2aa0c8" stroke-width="1.500"/>
<path d="M1749 929l-5 6h3v5h4v-5h3z" fill="#2a9ee8"/><path d="M1749 956l-5-6h3v-5h4v5h3z" fill="#f0a020"/>
<text x="1772" y="934" fill="#ddd" style="font-size:11px">0 K/s</text><text x="1772" y="951" fill="#ddd" style="font-size:11px">0 K/s</text>
<text x="1813" y="945" fill="#e8f4f8" style="font-size:22px">41</text><text x="1839" y="947" fill="#e8f4f8" style="font-size:11px">%</text>
<text x="1705" y="913" fill="#fff" style="font-size:35px;font-weight:bold">财富池</text>
<text x="1818" y="906" fill="#fff" style="font-size:15px;font-weight:bold">cfchi.com</text>
<text x="1819" y="924" fill="#eee" style="font-size:11px;font-weight:bold">指标交易平台</text>
<!-- sidebar -->
<rect x="1893" y="17" width="25" height="943" fill="#f0f0f0"/><path d="M1893.500 17V960" stroke="#bbb"/>
<g fill="#e6f2ff" stroke="#3a8ee6" stroke-width="1.200"><path d="M1897 27l7-6v3h9v6h-9v3z"/><path d="M1905 42l7 7h-3v9h-8v-9h-3z"/><path d="M1905 81l7-7h-3v-9h-8v9h-3z"/></g>
<g fill="#fff" stroke="#1f6fe0" shape-rendering="crispEdges"><rect x="1898.500" y="88.500" width="15" height="14"/><rect x="1898.500" y="111.500" width="15" height="14"/><rect x="1898.500" y="134.500" width="15" height="14"/><rect x="1898.500" y="157.500" width="15" height="14"/><rect x="1898.500" y="182.500" width="12" height="11"/><rect x="1898.500" y="204.500" width="15" height="14"/><rect x="1898.500" y="227.500" width="15" height="14"/><rect x="1898.500" y="251.500" width="15" height="14"/><rect x="1898.500" y="273.500" width="15" height="14"/><rect x="1898.500" y="319.500" width="15" height="14"/><rect x="1898.500" y="350.500" width="15" height="14"/><rect x="1898.500" y="473.500" width="15" height="14"/><rect x="1898.500" y="496.500" width="15" height="14"/></g>
<path d="M1901 92h4M1907 92h4M1901 95h4M1907 95h4" stroke="#e03030"/><path d="M1901 98h4" stroke="#20a040"/><circle cx="1909" cy="98" r="3" fill="#fff" stroke="#777"/>
<path d="M1901 114v9M1904 114v9M1907 114v9M1910 114v9" stroke="#e02020" stroke-width="2" stroke-dasharray="1 1"/>
<path d="M1900 145l4-3 3 1 6-5" fill="none" stroke="#e02020"/>
<path d="M1902 161v8M1907 160v9M1911 159v8" stroke="#111"/><rect x="1900.500" y="163" width="3" height="4" fill="#e02020"/><rect x="1905.500" y="162" width="3" height="5" fill="#20a020"/><rect x="1909.500" y="161" width="3" height="4" fill="#e02020"/>
<path d="M1901 185h3v-3h10v9h-3" fill="none" stroke="#1f6fe0"/><path d="M1901 186h7M1901 188h7M1901 190h7" stroke="#444"/>
<path d="M1902 230h4v3h-4zM1907 234h4v2h-4zM1907 238h4v2h-4zM1904 233v6h3" fill="none" stroke="#e09020"/>
<rect x="1902" y="254" width="8" height="9" fill="#f08030"/><path d="M1903.500 257h5M1903.500 259.500h5" stroke="#fff"/>
<g fill="#0a3a90"><text x="1906" y="211" class="m" style="font-size:11px;font-weight:bold">F10</text><text x="1906" y="280" class="m" style="font-size:11px;font-weight:bold">F12</text><text x="1906" y="480" class="m" style="font-size:11px;font-weight:bold">F5</text></g>
<rect x="1898" y="297" width="16" height="14" rx="4" fill="#e0fff0" stroke="#108060" stroke-width="1.500"/><text x="1906" y="304" class="m" fill="#0a3a90" style="font-size:10px;font-style:italic">f(x)</text>
<circle cx="1906" cy="326" r="4" fill="none" stroke="#1f6fe0" stroke-width="1.500"/>
<path d="M1896 341.500H1916M1896 465.500H1916" stroke="#aaa"/>
<path d="M1900 355l3-2 3 2 3-2 3 2M1900 360l3-2 3 2 3-2 3 2" fill="none" stroke="#e03030"/>
<text x="1906" y="380" class="m" fill="#3a4aa8" style="font-size:11px;font-weight:bold">RSI</text>
<text x="1906" y="403" class="m" fill="#d02020" style="font-size:15px;font-weight:bold">S</text>
<path d="M1906 418l4 4h-2v3h3v-2l4 3-4 4v-3h-3v3h2l-4 4-4-4h2v-3h-3v3l-4-4 4-3v2h3v-3h-2z" fill="#0a4ac0"/>
<path d="M1899 456l2-5 9-8 3 3-9 8z" fill="#f0a030" stroke="#886020" stroke-width=".8"/>
<path d="M1901 503a5 5 0 0 1 9-2M1911 503a5 5 0 0 1-9 2" fill="none" stroke="#30a040" stroke-width="2.500"/>
<rect x="1895.500" y="630.500" width="22" height="22" fill="#fafafa" stroke="#aaa"/>
<g fill="#0a2a8a"><text x="1905" y="526" class="m">1</text><text x="1905" y="549" class="m">5</text><text x="1905" y="572" class="m">15</text><text x="1905" y="595" class="m">30</text><text x="1905" y="618" class="m">60</text><text x="1906" y="641" class="m" style="font-size:13px">日</text><text x="1906" y="664" class="m" style="font-size:13px">周</text><text x="1906" y="687" class="m" style="font-size:13px">月</text><text x="1906" y="710" class="m" style="font-size:13px">N</text><text x="1906" y="733" class="m" style="font-size:13px">多</text><text x="1906" y="756" class="m" style="font-size:13px">季</text><text x="1906" y="779" class="m" style="font-size:13px">年</text></g>
</svg>
</body></html>
